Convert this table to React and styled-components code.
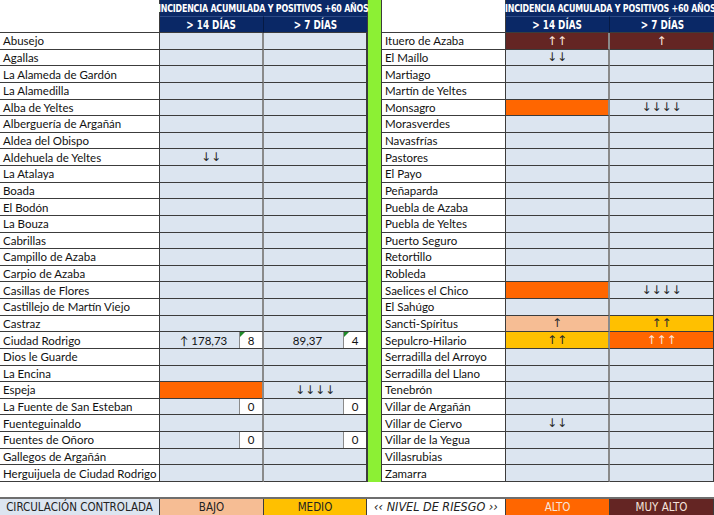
import React from 'react'
import styled, { createGlobalStyle } from 'styled-components'

const GlobalStyle = createGlobalStyle`
  html, body { margin: 0; padding: 0; background: #ffffff; }
  body { font-family: Lato, "Liberation Sans", sans-serif; }
`

const COLORS = {
  navy: '#0a2866',
  cell: '#dce5f0',
  lime: '#8cf034',
  wine: '#642523',
  orange: '#ff6600',
  peach: '#f6bd94',
  amber: '#ffc000',
  line: '#3c3c3c',
  divider: '#8a8a8a',
}

const leftRows = [
  ['Abusejo'],
  ['Agallas'],
  ['La Alameda de Gardón'],
  ['La Alamedilla'],
  ['Alba de Yeltes'],
  ['Alberguería de Argañán'],
  ['Aldea del Obispo'],
  ['Aldehuela de Yeltes', { text: '↓↓' }],
  ['La Atalaya'],
  ['Boada'],
  ['El Bodón'],
  ['La Bouza'],
  ['Cabrillas'],
  ['Campillo de Azaba'],
  ['Carpio de Azaba'],
  ['Casillas de Flores'],
  ['Castillejo de Martín Viejo'],
  ['Castraz'],
  ['Ciudad Rodrigo', { text: '↑ 178,73', box: '8', flag: true }, { text: '89,37', box: '4', flag: true }],
  ['Dios le Guarde'],
  ['La Encina'],
  ['Espeja', { bg: 'orange' }, { text: '↓↓↓↓' }],
  ['La Fuente de San Esteban', { box: '0' }, { box: '0' }],
  ['Fuenteguinaldo'],
  ['Fuentes de Oñoro', { box: '0' }, { box: '0' }],
  ['Gallegos de Argañán'],
  ['Herguijuela de Ciudad Rodrigo'],
]

const rightRows = [
  ['Ituero de Azaba', { bg: 'wine', text: '↑↑', light: true }, { bg: 'wine', text: '↑', light: true }],
  ['El Maíllo', { text: '↓↓' }],
  ['Martiago'],
  ['Martín de Yeltes'],
  ['Monsagro', { bg: 'orange' }, { text: '↓↓↓↓' }],
  ['Morasverdes'],
  ['Navasfrías'],
  ['Pastores'],
  ['El Payo'],
  ['Peñaparda'],
  ['Puebla de Azaba'],
  ['Puebla de Yeltes'],
  ['Puerto Seguro'],
  ['Retortillo'],
  ['Robleda'],
  ['Saelices el Chico', { bg: 'orange' }, { text: '↓↓↓↓' }],
  ['El Sahúgo'],
  ['Sancti-Spíritus', { bg: 'peach', text: '↑' }, { bg: 'amber', text: '↑↑' }],
  ['Sepulcro-Hilario', { bg: 'amber', text: '↑↑' }, { bg: 'orange', text: '↑↑↑', light: true }],
  ['Serradilla del Arroyo'],
  ['Serradilla del Llano'],
  ['Tenebrón'],
  ['Villar de Argañán'],
  ['Villar de Ciervo', { text: '↓↓' }],
  ['Villar de la Yegua'],
  ['Villasrubias'],
  ['Zamarra'],
]

const legend = [
  { label: 'CIRCULACIÓN CONTROLADA', bg: 'cell' },
  { label: 'BAJO', bg: 'peach' },
  { label: 'MEDIO', bg: 'amber' },
  { label: '‹‹ NIVEL DE RIESGO ››', bg: 'white', italic: true },
  { label: 'ALTO', bg: 'orange', light: true },
  { label: 'MUY ALTO', bg: 'wine', light: true },
]

const condensed = `"DejaVu Sans Condensed", "Liberation Sans Narrow", sans-serif`

const Page = styled.div`
  width: 714px;
  height: 515px;
  display: flex;
  flex-direction: column;
  overflow: hidden;
`

const Main = styled.div`
  display: flex;
  height: 483px;
`

const Table = styled.div`
  display: grid;
  grid-template-columns: ${p => p.$name}px 104px ${p => p.$last}px;
  grid-template-rows: 16px 17px repeat(27, 16.63px);
`

const Corner = styled.div`
  grid-row: 1 / 3;
  background: #fff;
  border-bottom: 1px solid ${COLORS.line};
  border-right: 1px solid ${COLORS.line};
`

const HeadTitle = styled.div`
  grid-column: 2 / 4;
  background: ${COLORS.navy};
  color: #fff;
  display: flex;
  align-items: center;
  justify-content: center;
  white-space: nowrap;
`

const Squeeze = styled.span`
  font-family: ${condensed};
  font-weight: bold;
  font-size: ${p => p.$size}px;
  letter-spacing: ${p => p.$tight || 0}px;
  display: inline-block;
  transform: scaleX(${p => p.$scale});
  transform-origin: center;
`

const HeadCol = styled.div`
  background: ${COLORS.navy};
  color: #fff;
  display: flex;
  align-items: center;
  justify-content: center;
  border-top: 1px solid #2c4a86;
  border-bottom: 1px solid ${COLORS.line};
  border-right: ${p => (p.$split ? `1px solid #061a44` : 'none')};
`

const Name = styled.div`
  background: #fff;
  color: #111;
  font-size: 11.5px;
  padding-left: 3px;
  display: flex;
  align-items: center;
  white-space: nowrap;
  overflow: hidden;
  border-bottom: 1px solid ${COLORS.line};
  border-right: 1px solid ${COLORS.line};
`

const Cell = styled.div`
  position: relative;
  background: ${p => COLORS[p.$bg] || COLORS.cell};
  color: ${p => (p.$light ? '#fbe6dc' : '#2a2a2a')};
  font-family: "DejaVu Sans", sans-serif;
  font-size: 12px;
  display: flex;
  align-items: stretch;
  border-bottom: 1px solid ${COLORS.line};
  border-right: ${p => (p.$split ? `2px solid ${COLORS.divider}` : `1px solid ${COLORS.line}`)};
`

const CellText = styled.span`
  flex: 1;
  display: flex;
  align-items: center;
  justify-content: center;
  padding-left: ${p => (p.$boxed ? '8px' : '0')};
`

const Num = styled.span`
  font-family: Lato, "Liberation Sans", sans-serif;
  font-size: 11.5px;
  color: #111;
`

const Box = styled.span`
  position: relative;
  width: 22px;
  background: #fff;
  border-left: 1px solid ${COLORS.divider};
  color: #111;
  font-family: Lato, "Liberation Sans", sans-serif;
  font-size: 11.5px;
  display: flex;
  align-items: center;
  justify-content: center;

  &::before {
    content: '';
    display: ${p => (p.$flag ? 'block' : 'none')};
    position: absolute;
    top: 0;
    left: 0;
    border-top: 5px solid #1f8a2a;
    border-right: 5px solid transparent;
  }
`

const GreenBar = styled.div`
  width: 13px;
  background: ${COLORS.lime};
  border-left: 1px solid ${COLORS.line};
  border-right: 1px solid ${COLORS.line};
`

const Legend = styled.div`
  margin-top: 15px;
  height: 17px;
  display: grid;
  grid-template-columns: 160px 104px 103px 139px 104px 104px;
  border-top: 2px solid #6e6e6e;
`

const LegendItem = styled.div`
  background: ${p => (p.$bg === 'white' ? '#fff' : COLORS[p.$bg])};
  color: ${p => (p.$light ? '#f6e4dc' : '#222')};
  font-family: ${condensed};
  font-style: ${p => (p.$italic ? 'italic' : 'normal')};
  font-size: ${p => (p.$italic ? 12.5 : 11.5)}px;
  display: flex;
  align-items: center;
  justify-content: center;
  white-space: nowrap;
  border-right: 1px solid ${COLORS.line};
`

const DataCell = ({ data = {}, split }) => {
  const boxed = Boolean(data.box)
  const isNum = data.text && /\d/.test(data.text)
  return (
    <Cell $bg={data.bg} $light={data.light} $split={split}>
      <CellText $boxed={boxed && data.text}>
        {isNum ? <Num>{data.text}</Num> : data.text}
      </CellText>
      {boxed && <Box $flag={data.flag}>{data.box}</Box>}
    </Cell>
  )
}

const Side = ({ rows, nameWidth, lastWidth }) => (
  <Table $name={nameWidth} $last={lastWidth}>
    <Corner />
    <HeadTitle>
      <Squeeze $size={10.5} $tight={-0.25} $scale={0.84}>INCIDENCIA ACUMULADA Y POSITIVOS +60 AÑOS</Squeeze>
    </HeadTitle>
    <HeadCol $split>
      <Squeeze $size={11.5} $scale={0.85}>&gt; 14 DÍAS</Squeeze>
    </HeadCol>
    <HeadCol>
      <Squeeze $size={11.5} $scale={0.85}>&gt; 7 DÍAS</Squeeze>
    </HeadCol>
    {rows.map(([name, a, b]) => (
      <React.Fragment key={name}>
        <Name>{name}</Name>
        <DataCell data={a} split />
        <DataCell data={b} />
      </React.Fragment>
    ))}
  </Table>
)

export default function App() {
  return (
    <Page>
      <GlobalStyle />
      <Main>
        <Side rows={leftRows} nameWidth={160} lastWidth={103} />
        <GreenBar />
        <Side rows={rightRows} nameWidth={124} lastWidth={104} />
      </Main>
      <Legend>
        {legend.map(item => (
          <LegendItem key={item.label} $bg={item.bg} $light={item.light} $italic={item.italic}>
            {item.label}
          </LegendItem>
        ))}
      </Legend>
    </Page>
  )
}
